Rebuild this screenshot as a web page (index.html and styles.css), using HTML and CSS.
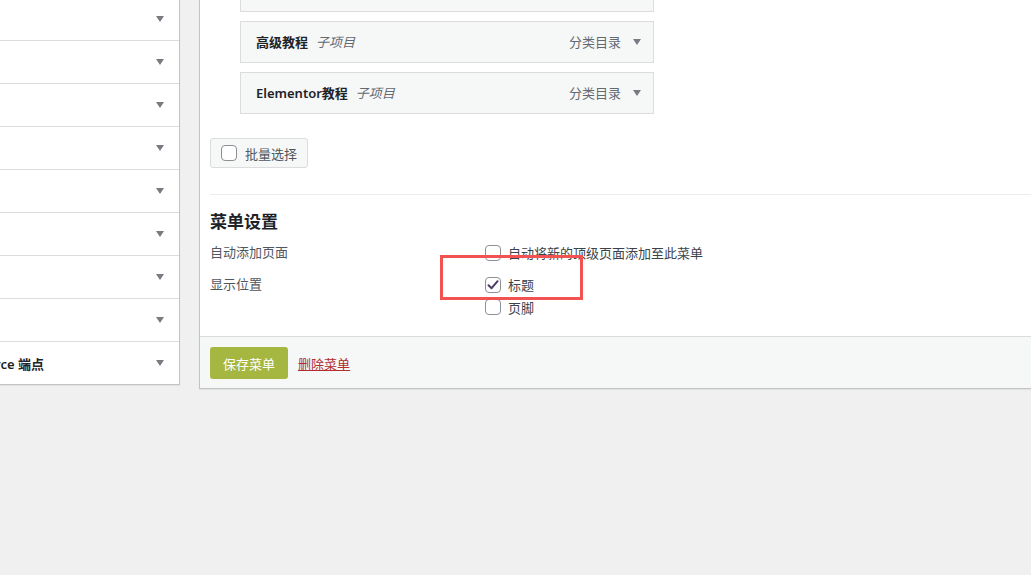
FILE: index.html
```html
<!DOCTYPE html>
<html lang="zh-CN">
<head>
    <meta charset="UTF-8">
    <meta name="viewport" content="width=device-width, initial-scale=1.0">
    <title>菜单</title>
    <link rel="stylesheet" href="styles.css">
</head>
<body>
    <div class="page">
        <div class="side">
            <ul class="side-list">
                <li class="side-row"><span class="caret"></span></li>
                <li class="side-row"><span class="caret"></span></li>
                <li class="side-row"><span class="caret"></span></li>
                <li class="side-row"><span class="caret"></span></li>
                <li class="side-row"><span class="caret"></span></li>
                <li class="side-row"><span class="caret"></span></li>
                <li class="side-row"><span class="caret"></span></li>
                <li class="side-row"><span class="caret"></span></li>
                <li class="side-row"><span class="side-title">WooCommerce 端点</span><span class="caret"></span></li>
            </ul>
        </div>

        <div class="editor">
            <div class="editor-body">
                <ul class="menu-items">
                    <li class="menu-item"></li>
                    <li class="menu-item">
                        <span class="item-title">高级教程</span><span class="item-sub">子项目</span>
                        <span class="item-type">分类目录</span><span class="caret"></span>
                    </li>
                    <li class="menu-item">
                        <span class="item-title">Elementor教程</span><span class="item-sub">子项目</span>
                        <span class="item-type">分类目录</span><span class="caret"></span>
                    </li>
                </ul>

                <div class="bulk">
                    <label class="bulk-btn"><span class="box"></span>批量选择</label>
                </div>

                <div class="settings">
                    <h3>菜单设置</h3>
                    <div class="group">
                        <div class="group-name">自动添加页面</div>
                        <div class="group-input">
                            <label class="check"><span class="box"></span>自动将新的顶级页面添加至此菜单</label>
                        </div>
                    </div>
                    <div class="group">
                        <div class="group-name">显示位置</div>
                        <div class="group-input">
                            <label class="check">
                                <span class="box checked">
                                    <svg width="14" height="14" viewBox="0 0 14 14"><path d="M2.5 7.2 L5.6 10.2 L11.6 3.2" fill="none" stroke="#4b3d68" stroke-width="2" stroke-linecap="round" stroke-linejoin="round"/></svg>
                                </span>标题
                            </label>
                            <label class="check"><span class="box"></span>页脚</label>
                        </div>
                    </div>
                </div>
            </div>

            <div class="editor-footer">
                <button class="save-btn">保存菜单</button>
                <a class="delete-link" href="#">删除菜单</a>
            </div>
        </div>
    </div>

    <div class="highlight"></div>
</body>
</html>
```

FILE: styles.css
```css
* {
    box-sizing: border-box;
}
html, body {
    margin: 0;
    padding: 0;
}
body {
    width: 1031px;
    height: 575px;
    overflow: hidden;
    position: relative;
    background-color: #f0f0f1;
    font-family: "Noto Sans", "Noto Sans CJK SC", sans-serif;
    font-size: 13px;
    color: #3c434a;
}
.page {
    display: flex;
    align-items: flex-start;
}

/* left column */
.side {
    width: 273px;
    margin-left: -93px;
    margin-top: -2px;
    background-color: #fff;
    border: 1px solid #c3c4c7;
    border-top: none;
    box-shadow: 0 1px 1px rgba(0, 0, 0, .05);
}
.side-list {
    list-style: none;
    margin: 0;
    padding: 0;
}
.side-row {
    display: flex;
    align-items: center;
    justify-content: flex-end;
    height: 43px;
    padding: 0 15px 0 10px;
    border-bottom: 1px solid #dcdcde;
}
.side-row:last-child {
    height: 42px;
    border-bottom: none;
}
.side-title {
    margin-right: auto;
    font-size: 13px;
    font-weight: 600;
    color: #1d2327;
    white-space: nowrap;
}
.caret {
    width: 0;
    height: 0;
    border-left: 4px solid transparent;
    border-right: 4px solid transparent;
    border-top: 6px solid #787c82;
}

/* menu editor */
.editor {
    flex: 1;
    margin-left: 19px;
    margin-right: -20px;
    margin-top: -39px;
    background-color: #fff;
    border: 1px solid #c3c4c7;
    border-top: none;
    box-shadow: 0 1px 1px rgba(0, 0, 0, .05);
}
.editor-body {
    padding: 0 10px 18px;
}
.menu-items {
    list-style: none;
    margin: 0;
    padding: 0;
}
.menu-item {
    display: flex;
    align-items: center;
    width: 414px;
    height: 42px;
    margin: 9px 0 0 30px;
    padding: 0 12px 0 15px;
    background-color: #f6f7f7;
    border: 1px solid #dcdcde;
    line-height: 20px;
}
.item-title {
    font-weight: 600;
    color: #1d2327;
}
.item-sub {
    margin-left: 8px;
    font-style: italic;
    color: #646970;
}
.item-type {
    margin-left: auto;
    margin-right: 12px;
    color: #646970;
}

.bulk {
    margin-top: 24px;
}
.bulk-btn {
    display: inline-flex;
    align-items: center;
    height: 30px;
    padding: 0 10px;
    background-color: #f6f7f7;
    border: 1px solid #dcdcde;
    border-radius: 3px;
    color: #50575e;
}
.box {
    display: inline-flex;
    align-items: center;
    justify-content: center;
    width: 16px;
    height: 16px;
    margin-right: 8px;
    background-color: #fff;
    border: 1px solid #8c8f94;
    border-radius: 4px;
    flex-shrink: 0;
}

.settings {
    margin-top: 26px;
    border-top: 1px solid #ececed;
}
.settings h3 {
    margin: 15px 0 0;
    font-size: 17px;
    line-height: 24px;
    font-weight: 600;
    color: #1d2327;
}
.group {
    display: flex;
    margin-top: 7px;
}
.group + .group {
    margin-top: 9px;
}
.group-name {
    width: 275px;
    line-height: 23px;
    color: #50575e;
}
.check {
    display: flex;
    align-items: center;
    height: 23px;
    color: #3c434a;
}
.check + .check {
    height: 22px;
}
.check .box {
    margin-right: 7px;
}

.editor-footer {
    display: flex;
    align-items: center;
    padding: 10px 10px 9px;
    background-color: #f6f7f7;
    border-top: 1px solid #dcdcde;
}
.save-btn {
    height: 32px;
    padding: 0 13px;
    background-color: #a5b641;
    color: #fff;
    border: none;
    border-radius: 3px;
    font-family: inherit;
    font-size: 13px;
    cursor: pointer;
}
.delete-link {
    margin-left: 10px;
    color: #b32d2e;
    text-decoration: underline;
}

/* annotation box */
.highlight {
    position: absolute;
    left: 440px;
    top: 255px;
    width: 143px;
    height: 45px;
    border: 3px solid #f25252;
}
```
